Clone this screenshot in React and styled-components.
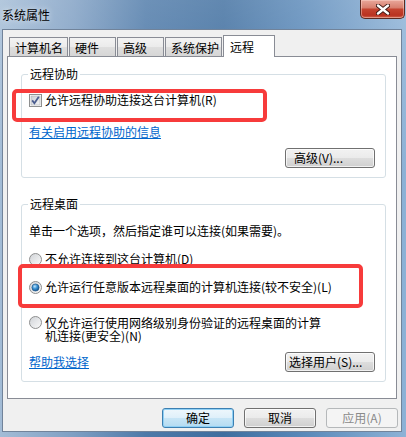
import React from 'react';
import styled, { createGlobalStyle } from 'styled-components';

const GlobalStyle = createGlobalStyle`
  html, body {
    margin: 0;
    padding: 0;
    background: #fff;
  }
  body {
    font-family: "Noto Sans CJK SC", "Liberation Sans", sans-serif;
    font-size: 12px;
    color: #000;
  }
`;

const Window = styled.div`
  position: relative;
  width: 406px;
  height: 437px;
  display: flex;
  flex-direction: column;
  overflow: hidden;
  background:
    linear-gradient(180deg, rgba(255, 255, 255, 0.18) 0%, rgba(255, 255, 255, 0) 40%),
    linear-gradient(90deg, #a3bcd6 0%, #7f9fc3 18%, #4d79a8 36%, #3f6e9f 55%, #5a89b9 75%, #8db2d6 100%);
`;

const TitleBar = styled.div`
  height: 29px;
  flex: none;
  display: flex;
  justify-content: space-between;
`;

const Title = styled.div`
  align-self: center;
  padding-left: 2px;
  line-height: 14px;
  color: #000;
  text-shadow: 0 0 6px rgba(255, 255, 255, 0.8);
`;

const CloseButton = styled.div`
  width: 45px;
  height: 19px;
  margin-right: 1px;
  box-sizing: border-box;
  border: 1px solid #5b2a22;
  border-top: none;
  border-radius: 0 0 5px 5px;
  display: flex;
  align-items: center;
  justify-content: center;
  background: linear-gradient(180deg, #e9a89b 0%, #d8806f 42%, #c4432f 52%, #b93221 85%, #d2664f 100%);
  box-shadow: inset 0 0 0 1px rgba(255, 220, 210, 0.45);
`;

const Client = styled.div`
  flex: 1;
  margin: 0 4px 5px 2px;
  border: 1px solid #71839a;
  background: #f0f0f0;
  padding: 0 4px 3px 4px;
  display: flex;
  flex-direction: column;
`;

const TabStrip = styled.div`
  height: 26px;
  flex: none;
  display: flex;
  align-items: flex-end;
  padding-left: 2px;
`;

const Tab = styled.div`
  box-sizing: border-box;
  width: ${p => p.$w}px;
  height: ${p => (p.$active ? 22 : 19)}px;
  margin-right: 1px;
  margin-bottom: ${p => (p.$active ? -1 : 0)}px;
  padding-left: ${p => (p.$active ? 6 : 5)}px;
  border: 1px solid #898c95;
  border-bottom: none;
  display: flex;
  align-items: center;
  position: relative;
  z-index: ${p => (p.$active ? 1 : 0)};
  background: ${p =>
    p.$active ? '#fff' : 'linear-gradient(180deg, #f3f3f3 0%, #ebebeb 50%, #dedede 51%, #d6d6d6 100%)'};
  white-space: nowrap;
`;

const Panel = styled.div`
  box-sizing: border-box;
  height: 343px;
  flex: none;
  background: #fff;
  border: 1px solid #898c95;
  padding: 0 10px 0 13px;
`;

const Group = styled.fieldset`
  margin: ${p => p.$top}px 0 0 0;
  padding: ${p => p.$pt}px 10px 9px 7px;
  border: 1px solid #d5dfe5;
  border-radius: 3px;
  min-inline-size: auto;
  display: flex;
  flex-direction: column;
`;

const Legend = styled.legend`
  padding: 0 2px;
  margin-left: -1px;
  line-height: 14px;
`;

const Row = styled.div`
  display: flex;
  align-items: ${p => (p.$top ? 'flex-start' : 'center')};
  justify-content: ${p => (p.$spread ? 'space-between' : 'flex-start')};
  margin-top: ${p => p.$mt || 0}px;
  min-height: 14px;
  line-height: ${p => (p.$lh ? p.$lh : 14)}px;
`;

const Label = styled.span`
  margin-left: 3px;
  max-width: ${p => (p.$max ? `${p.$max}px` : 'none')};
`;

const Link = styled.a`
  color: #0066cc;
  text-decoration: underline;
  cursor: pointer;
`;

const Button = styled.button`
  box-sizing: border-box;
  width: ${p => p.$w || 72}px;
  height: 20px;
  padding: 0 0 0 ${p => p.$pl || 0}px;
  font: inherit;
  font-size: 12px;
  line-height: 18px;
  text-align: ${p => (p.$pl ? 'left' : 'center')};
  color: ${p => (p.$disabled ? '#8a8a8a' : '#000')};
  border-radius: 3px;
  border: 1px solid ${p => (p.$default ? '#3c7fb1' : p.$disabled ? '#b5b8ba' : '#707070')};
  background: ${p =>
    p.$disabled
      ? '#f4f4f4'
      : p.$default
      ? 'linear-gradient(180deg, #eef7fc 0%, #dff0fa 48%, #c7e5f6 52%, #b4dbf1 100%)'
      : 'linear-gradient(180deg, #f2f2f2 0%, #ebebeb 48%, #dddddd 52%, #cfcfcf 100%)'};
  box-shadow: ${p =>
    p.$default
      ? 'inset 0 0 0 1px #8fd0f5'
      : p.$disabled
      ? 'none'
      : 'inset 0 0 0 1px rgba(255, 255, 255, 0.7)'};
  white-space: nowrap;
`;

const ButtonBar = styled.div`
  display: flex;
  justify-content: flex-end;
  gap: 10px;
  margin-top: 9px;
  margin-right: -1px;
`;

const Annotation = styled.div`
  position: absolute;
  left: ${p => p.$x}px;
  top: ${p => p.$y}px;
  width: ${p => p.$w}px;
  height: ${p => p.$h}px;
  box-sizing: border-box;
  border: 4px solid #f73b3b;
  border-radius: 5px;
  pointer-events: none;
`;

const Checkbox = () => (
  <svg width="13" height="13" viewBox="0 0 13 13" style={{ flex: 'none' }}>
    <defs>
      <linearGradient id="cbfill" x1="0" y1="0" x2="1" y2="1">
        <stop offset="0" stopColor="#cbcfd5" />
        <stop offset="1" stopColor="#f6f6f6" />
      </linearGradient>
    </defs>
    <rect x="0.5" y="0.5" width="12" height="12" fill="#fff" stroke="#8e8f8f" />
    <rect x="2" y="2" width="9" height="9" fill="url(#cbfill)" stroke="#a9acb2" strokeWidth="0.6" />
    <path d="M3.2 6.4 L5.4 9.2 L9.8 2.8" fill="none" stroke="#4a5c8f" strokeWidth="1.8" />
  </svg>
);

const Radio = ({ checked }) => (
  <svg width="13" height="13" viewBox="0 0 13 13" style={{ flex: 'none' }}>
    <defs>
      <linearGradient id="rbfill" x1="0" y1="0" x2="1" y2="1">
        <stop offset="0" stopColor="#cfd2d6" />
        <stop offset="1" stopColor="#fbfbfb" />
      </linearGradient>
      <radialGradient id="rbdot" cx="0.4" cy="0.35" r="0.7">
        <stop offset="0" stopColor="#c3e6fb" />
        <stop offset="0.45" stopColor="#3d95d6" />
        <stop offset="1" stopColor="#0f4c86" />
      </radialGradient>
    </defs>
    <circle cx="6.5" cy="6.5" r="6" fill="url(#rbfill)" stroke="#8e8f8f" />
    {checked && <circle cx="6.5" cy="6.5" r="3.6" fill="url(#rbdot)" stroke="#1c4f7d" strokeWidth="0.6" />}
  </svg>
);

const CloseGlyph = () => (
  <svg width="14" height="11" viewBox="0 0 14 11">
    <path d="M2 1.5 L12 9.5 M12 1.5 L2 9.5" stroke="#3b1712" strokeWidth="4.2" strokeLinecap="round" />
    <path d="M2 1.5 L12 9.5 M12 1.5 L2 9.5" stroke="#fff" strokeWidth="2.4" strokeLinecap="round" />
  </svg>
);

const tabs = [
  { name: '计算机名', w: 59 },
  { name: '硬件', w: 47 },
  { name: '高级', w: 47 },
  { name: '系统保护', w: 57 },
  { name: '远程', w: 52, active: true },
];

const App = () => {
  return (
    <>
      <GlobalStyle />
      <Window>
        <TitleBar>
          <Title>系统属性</Title>
          <CloseButton>
            <CloseGlyph />
          </CloseButton>
        </TitleBar>
        <Client>
          <TabStrip>
            {tabs.map(t => (
              <Tab key={t.name} $w={t.w} $active={t.active}>
                {t.name}
              </Tab>
            ))}
          </TabStrip>
          <Panel>
            <Group $top={10} $pt={12}>
              <Legend>远程协助</Legend>
              <Row>
                <Checkbox />
                <Label>允许远程协助连接这台计算机(R)</Label>
              </Row>
              <Row $mt={18}>
                <Link>有关启用远程协助的信息</Link>
              </Row>
              <Row $mt={9} $spread>
                <span />
                <Button $w={90} $pl={8}>
                  高级(V)...
                </Button>
              </Row>
            </Group>
            <Group $top={19} $pt={13}>
              <Legend>远程桌面</Legend>
              <Row>单击一个选项，然后指定谁可以连接(如果需要)。</Row>
              <Row $mt={14}>
                <Radio />
                <Label>不允许连接到这台计算机(D)</Label>
              </Row>
              <Row $mt={14}>
                <Radio checked />
                <Label>允许运行任意版本远程桌面的计算机连接(较不安全)(L)</Label>
              </Row>
              <Row $mt={22} $top $lh={13}>
                <Radio />
                <Label $max={280}>仅允许运行使用网络级别身份验证的远程桌面的计算机连接(更安全)(N)</Label>
              </Row>
              <Row $mt={10} $spread>
                <Link>帮助我选择</Link>
                <Button $w={90} $pl={3}>
                  选择用户(S)...
                </Button>
              </Row>
            </Group>
          </Panel>
          <ButtonBar>
            <Button $default>确定</Button>
            <Button>取消</Button>
            <Button $disabled>应用(A)</Button>
          </ButtonBar>
        </Client>
        <Annotation $x={12} $y={89} $w={255} $h={33} />
        <Annotation $x={18} $y={264} $w={345} $h={44} />
      </Window>
    </>
  );
};

export default App;
